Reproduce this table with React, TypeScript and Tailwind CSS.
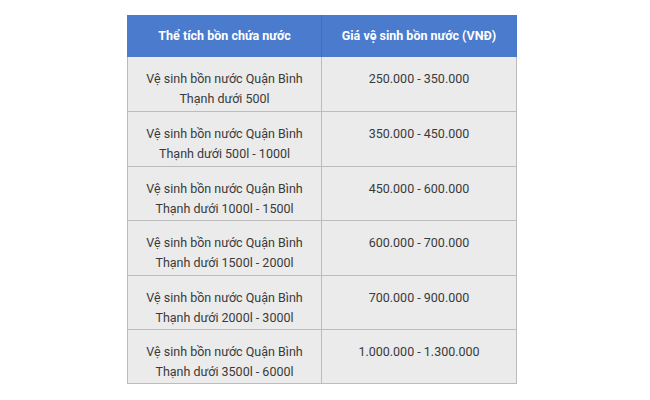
const rows: [string, string, string][] = [
  ["Vệ sinh bồn nước Quận Bình", "Thạnh dưới 500l", "250.000 - 350.000"],
  ["Vệ sinh bồn nước Quận Bình", "Thạnh dưới 500l - 1000l", "350.000 - 450.000"],
  ["Vệ sinh bồn nước Quận Bình", "Thạnh dưới 1000l - 1500l", "450.000 - 600.000"],
  ["Vệ sinh bồn nước Quận Bình", "Thạnh dưới 1500l - 2000l", "600.000 - 700.000"],
  ["Vệ sinh bồn nước Quận Bình", "Thạnh dưới 2000l - 3000l", "700.000 - 900.000"],
  ["Vệ sinh bồn nước Quận Bình", "Thạnh dưới 3500l - 6000l", "1.000.000 - 1.300.000"],
];

export default function App() {
  return (
    <div className="w-[650px] h-[400px] bg-white pl-[127px] pt-[15px] font-['Roboto',sans-serif]">
      <div className="w-[390px]">
        <div className="grid grid-cols-2 bg-[#4a7bcd] text-white font-bold text-[12.5px] h-[42px] border-x border-[#4a7bcd]">
          <div className="flex items-center justify-center border-r border-[#3f6db9]">Thể tích bồn chứa nước</div>
          <div className="flex items-center justify-center">Giá vệ sinh bồn nước (VNĐ)</div>
        </div>
        <div className="border-x border-b border-[#bcbcbc]">
          {rows.map((r, i) => (
            <div key={i} className="grid grid-cols-2 h-[54.4px] bg-[#ebebeb] text-[#3a3a3a] text-[12.5px] leading-[20px] border-t border-[#bcbcbc] first:border-t-0">
              <div className="flex flex-col items-center pt-[12px] text-center border-r border-[#bcbcbc]">
                <span>{r[0]}</span>
                <span>{r[1]}</span>
              </div>
              <div className="pt-[12px] text-center">{r[2]}</div>
            </div>
          ))}
        </div>
      </div>
    </div>
  );
}
